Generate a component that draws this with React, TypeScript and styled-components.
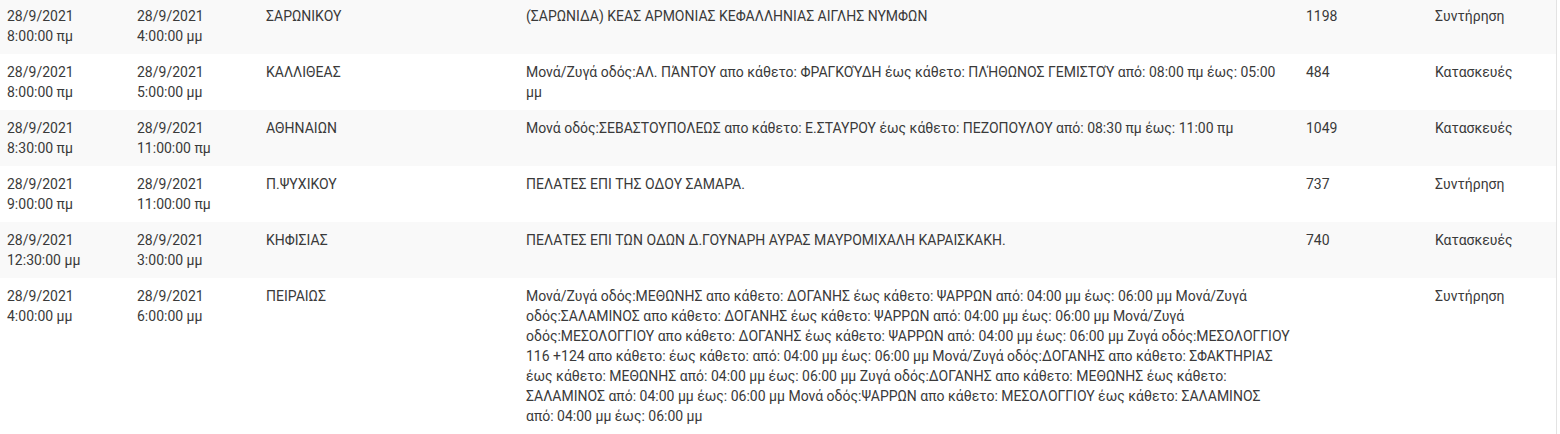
import React from "react";
import styled, { createGlobalStyle } from "styled-components";

const Global = createGlobalStyle`
  html, body { margin: 0; padding: 0; background: #fff; }
  body { font-family: Roboto, "Noto Sans", sans-serif; }
`;

const Frame = styled.div`
  width: 1557px;
  height: 434px;
  overflow: hidden;
  border-right: 1px solid #e3e3e3;
  box-sizing: border-box;
`;

const Table = styled.table`
  width: 1556px;
  margin-top: -2px;
  border-collapse: collapse;
  table-layout: fixed;
  font-size: 14px;
  line-height: 20px;
  color: #3a3a3a;
`;

const Col = styled.col<{ $w: number }>`
  width: ${(p) => p.$w}px;
`;

const Row = styled.tr<{ $striped: boolean }>`
  background: ${(p) => (p.$striped ? "#f9f9f9" : "#fff")};
  & + & > td {
    border-top: 1px solid #e6e6e6;
  }
`;

const Cell = styled.td`
  padding: 8px 7px;
  vertical-align: top;
  text-align: left;
`;

const Line = styled.span`
  display: block;
  white-space: nowrap;
`;

type Item = {
  from: [string, string];
  to: [string, string];
  area: string;
  desc: string[];
  count: string;
  kind: string;
};

const widths = [130, 129, 260, 780, 129, 128];

const rows: Item[] = [
  {
    from: ["28/9/2021", "8:00:00 πμ"],
    to: ["28/9/2021", "4:00:00 μμ"],
    area: "ΣΑΡΩΝΙΚΟΥ",
    desc: ["(ΣΑΡΩΝΙΔΑ) ΚΕΑΣ ΑΡΜΟΝΙΑΣ ΚΕΦΑΛΛΗΝΙΑΣ ΑΙΓΛΗΣ ΝΥΜΦΩΝ"],
    count: "1198",
    kind: "Συντήρηση",
  },
  {
    from: ["28/9/2021", "8:00:00 πμ"],
    to: ["28/9/2021", "5:00:00 μμ"],
    area: "ΚΑΛΛΙΘΕΑΣ",
    desc: [
      "Μονά/Ζυγά οδός:ΑΛ. ΠΆΝΤΟΥ απο κάθετο: ΦΡΑΓΚΟΎΔΗ έως κάθετο: ΠΛΉΘΩΝΟΣ ΓΕΜΙΣΤΟΎ από: 08:00 πμ έως: 05:00",
      "μμ",
    ],
    count: "484",
    kind: "Κατασκευές",
  },
  {
    from: ["28/9/2021", "8:30:00 πμ"],
    to: ["28/9/2021", "11:00:00 πμ"],
    area: "ΑΘΗΝΑΙΩΝ",
    desc: [
      "Μονά οδός:ΣΕΒΑΣΤΟΥΠΟΛΕΩΣ απο κάθετο: Ε.ΣΤΑΥΡΟΥ έως κάθετο: ΠΕΖΟΠΟΥΛΟΥ από: 08:30 πμ έως: 11:00 πμ",
    ],
    count: "1049",
    kind: "Κατασκευές",
  },
  {
    from: ["28/9/2021", "9:00:00 πμ"],
    to: ["28/9/2021", "11:00:00 πμ"],
    area: "Π.ΨΥΧΙΚΟΥ",
    desc: ["ΠΕΛΑΤΕΣ ΕΠΙ ΤΗΣ ΟΔΟΥ ΣΑΜΑΡΑ."],
    count: "737",
    kind: "Συντήρηση",
  },
  {
    from: ["28/9/2021", "12:30:00 μμ"],
    to: ["28/9/2021", "3:00:00 μμ"],
    area: "ΚΗΦΙΣΙΑΣ",
    desc: ["ΠΕΛΑΤΕΣ ΕΠΙ ΤΩΝ ΟΔΩΝ Δ.ΓΟΥΝΑΡΗ ΑΥΡΑΣ ΜΑΥΡΟΜΙΧΑΛΗ ΚΑΡΑΙΣΚΑΚΗ."],
    count: "740",
    kind: "Κατασκευές",
  },
  {
    from: ["28/9/2021", "4:00:00 μμ"],
    to: ["28/9/2021", "6:00:00 μμ"],
    area: "ΠΕΙΡΑΙΩΣ",
    desc: [
      "Μονά/Ζυγά οδός:ΜΕΘΩΝΗΣ απο κάθετο: ΔΟΓΑΝΗΣ έως κάθετο: ΨΑΡΡΩΝ από: 04:00 μμ έως: 06:00 μμ Μονά/Ζυγά",
      "οδός:ΣΑΛΑΜΙΝΟΣ απο κάθετο: ΔΟΓΑΝΗΣ έως κάθετο: ΨΑΡΡΩΝ από: 04:00 μμ έως: 06:00 μμ Μονά/Ζυγά",
      "οδός:ΜΕΣΟΛΟΓΓΙΟΥ απο κάθετο: ΔΟΓΑΝΗΣ έως κάθετο: ΨΑΡΡΩΝ από: 04:00 μμ έως: 06:00 μμ Ζυγά οδός:ΜΕΣΟΛΟΓΓΙΟΥ",
      "116 +124 απο κάθετο: έως κάθετο: από: 04:00 μμ έως: 06:00 μμ Μονά/Ζυγά οδός:ΔΟΓΑΝΗΣ απο κάθετο: ΣΦΑΚΤΗΡΙΑΣ",
      "έως κάθετο: ΜΕΘΩΝΗΣ από: 04:00 μμ έως: 06:00 μμ Ζυγά οδός:ΔΟΓΑΝΗΣ απο κάθετο: ΜΕΘΩΝΗΣ έως κάθετο:",
      "ΣΑΛΑΜΙΝΟΣ από: 04:00 μμ έως: 06:00 μμ Μονά οδός:ΨΑΡΡΩΝ απο κάθετο: ΜΕΣΟΛΟΓΓΙΟΥ έως κάθετο: ΣΑΛΑΜΙΝΟΣ",
      "από: 04:00 μμ έως: 06:00 μμ",
    ],
    count: "",
    kind: "Συντήρηση",
  },
];

export default function App() {
  return (
    <>
      <Global />
      <Frame>
        <Table>
          <colgroup>
            {widths.map((w, i) => (
              <Col key={i} $w={w} />
            ))}
          </colgroup>
          <tbody>
            {rows.map((r, i) => (
              <Row key={i} $striped={i % 2 === 0}>
                <Cell>
                  <Line>{r.from[0]}</Line>
                  <Line>{r.from[1]}</Line>
                </Cell>
                <Cell>
                  <Line>{r.to[0]}</Line>
                  <Line>{r.to[1]}</Line>
                </Cell>
                <Cell>{r.area}</Cell>
                <Cell>
                  {r.desc.map((l, j) => (
                    <Line key={j}>{l}</Line>
                  ))}
                </Cell>
                <Cell>{r.count}</Cell>
                <Cell>{r.kind}</Cell>
              </Row>
            ))}
          </tbody>
        </Table>
      </Frame>
    </>
  );
}
